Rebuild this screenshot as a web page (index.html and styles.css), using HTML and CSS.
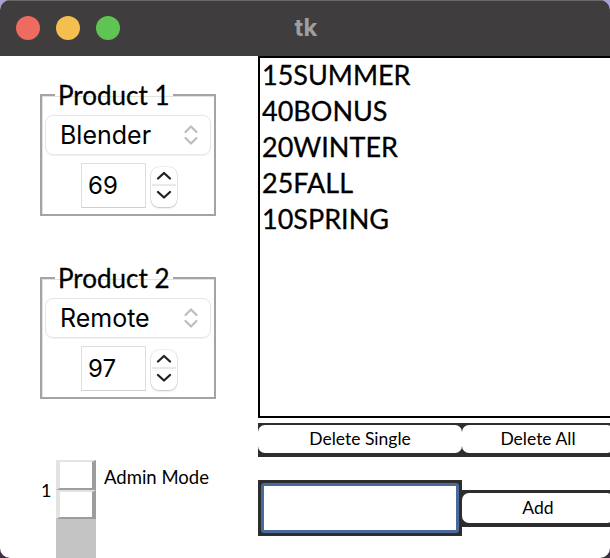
FILE: index.html
```html
<!DOCTYPE html>
<html>
<head>
<meta charset="utf-8">
<link rel="stylesheet" href="styles.css">
</head>
<body>
<div class="window">
  <div class="titlebar">
    <div class="lights">
      <span class="light red"></span>
      <span class="light yellow"></span>
      <span class="light green"></span>
    </div>
    <div class="title">tk</div>
    <div></div>
  </div>
  <div class="content">
    <div class="left">
      <fieldset class="frame frame1">
        <legend>Product 1</legend>
        <div class="combo">
          <span>Blender</span>
          <svg class="combo-arrows" width="16" height="22" viewBox="0 0 16 22"><path d="M2.5 8 L8 2.5 L13.5 8 M2.5 14 L8 19.5 L13.5 14" fill="none" stroke="#bdbdbd" stroke-width="2.2" stroke-linecap="round" stroke-linejoin="round"/></svg>
        </div>
        <div class="spin">
          <div class="spin-entry">69</div>
          <div class="spin-btns">
            <svg width="26" height="40" viewBox="0 0 26 40"><path d="M7 11.5 L13 6 L19 11.5" fill="none" stroke="#222" stroke-width="2.3" stroke-linecap="round" stroke-linejoin="round"/><path d="M1 18 H25" stroke="#d4d4d4" stroke-width="1"/><path d="M7 25 L13 30.5 L19 25" fill="none" stroke="#222" stroke-width="2.3" stroke-linecap="round" stroke-linejoin="round"/></svg>
          </div>
        </div>
      </fieldset>
      <fieldset class="frame frame2">
        <legend>Product 2</legend>
        <div class="combo">
          <span>Remote</span>
          <svg class="combo-arrows" width="16" height="22" viewBox="0 0 16 22"><path d="M2.5 8 L8 2.5 L13.5 8 M2.5 14 L8 19.5 L13.5 14" fill="none" stroke="#bdbdbd" stroke-width="2.2" stroke-linecap="round" stroke-linejoin="round"/></svg>
        </div>
        <div class="spin">
          <div class="spin-entry">97</div>
          <div class="spin-btns">
            <svg width="26" height="40" viewBox="0 0 26 40"><path d="M7 11.5 L13 6 L19 11.5" fill="none" stroke="#222" stroke-width="2.3" stroke-linecap="round" stroke-linejoin="round"/><path d="M1 18 H25" stroke="#d4d4d4" stroke-width="1"/><path d="M7 25 L13 30.5 L19 25" fill="none" stroke="#222" stroke-width="2.3" stroke-linecap="round" stroke-linejoin="round"/></svg>
          </div>
        </div>
      </fieldset>
      <div class="scale-row">
        <span class="scale-val">1</span>
        <div class="trough">
          <div class="sbox"></div>
          <div class="sbox"></div>
        </div>
        <span class="admin">Admin Mode</span>
      </div>
    </div>
    <div class="right">
      <div class="listbox">
        <div class="items">
          <div>15SUMMER</div>
          <div>40BONUS</div>
          <div>20WINTER</div>
          <div>25FALL</div>
          <div>10SPRING</div>
        </div>
      </div>
      <div class="btn-row">
        <div class="btn wide"><span>Delete Single</span></div>
        <div class="btn narrow"><span>Delete All</span></div>
      </div>
      <div class="entry-row">
        <div class="entry"><div class="entry-inner"></div></div>
        <div class="btn narrow add"><span>Add</span></div>
      </div>
    </div>
  </div>
</div>
</body>
</html>
```

FILE: styles.css
```css
html {
  background: linear-gradient(#a7a1d6 0px, #a7a1d6 30px, #3e3242 540px);
}
body {
  margin: 0;
}
.window {
  width: 610px;
  height: 558px;
  border-radius: 10px;
  overflow: hidden;
  background: #fff;
  display: flex;
  flex-direction: column;
}
.titlebar {
  height: 56px;
  flex: none;
  background: #3f3d3d;
  box-shadow: inset 0 1px 0 #6a6868;
  display: grid;
  grid-template-columns: 1fr auto 1fr;
  align-items: center;
}
.lights {
  display: flex;
  gap: 16px;
  padding-left: 16px;
}
.light {
  width: 24px;
  height: 24px;
  border-radius: 50%;
}
.red { background: #ef6a5f; }
.yellow { background: #f5bf4f; }
.green { background: #5fc454; }
.title {
  font-family: Inter, "Liberation Sans", sans-serif;
  font-weight: 700;
  font-size: 24px;
  color: #9f9f9f;
  padding-left: 2px;
  margin-top: -2px;
}
.content {
  flex: 1;
  min-height: 0;
  display: grid;
  grid-template-columns: 258px 360px;
}
.left {
  display: flex;
  flex-direction: column;
}
.frame {
  box-sizing: border-box;
  width: 176px;
  margin: 0 0 0 40px;
  padding: 0 3px 6px;
  border: 2px solid #a4a4a4;
  box-shadow: inset 1px 1px 0 #e2e2e2;
  min-width: 0;
}
.frame1 { margin-top: 24px; }
.frame2 { margin-top: 47px; }
.frame legend {
  font-family: Lato, "Open Sans", sans-serif;
  font-size: 26px;
  line-height: 30px;
  color: #000;
  margin-left: 10px;
  padding: 0 3px;
  -webkit-text-stroke: 0.3px #000;
}
.combo {
  margin-top: 5px;
  height: 40px;
  box-sizing: border-box;
  border: 1px solid #e6e6e6;
  border-radius: 8px;
  box-shadow: 0 1px 1px rgba(0, 0, 0, 0.06);
  display: flex;
  align-items: center;
  justify-content: space-between;
  padding: 0 11px 0 14px;
  font-family: Inter, "Liberation Sans", sans-serif;
  font-size: 25px;
  color: #000;
}
.spin {
  margin-top: 8px;
  height: 45px;
  display: flex;
  justify-content: center;
  gap: 5px;
  padding-left: 2px;
}
.spin-entry {
  width: 65px;
  height: 45px;
  box-sizing: border-box;
  border: 1px solid #dedede;
  border-bottom-color: #cfcfcf;
  font-family: Inter, "Liberation Sans", sans-serif;
  font-size: 24px;
  line-height: 43px;
  padding-left: 6px;
  color: #000;
}
.spin-btns {
  width: 26px;
  height: 40px;
  margin-top: 4px;
  border-radius: 8px;
  background: #fff;
  box-shadow: 0 0 0 0.5px rgba(0, 0, 0, 0.12), 0 1px 2px rgba(0, 0, 0, 0.2);
}
.spin-btns svg {
  display: block;
}
.scale-row {
  margin-top: 61px;
  margin-left: 41px;
  display: flex;
  align-items: flex-start;
  flex: 1;
}
.scale-val {
  width: 15px;
  font-family: Lato, "Open Sans", sans-serif;
  font-size: 18px;
  line-height: 22px;
  margin-top: 19px;
}
.trough {
  width: 40px;
  align-self: stretch;
  background: #c3c3c3;
}
.sbox {
  box-sizing: border-box;
  height: 29.5px;
  background: #fff;
  border-left: 4px solid #e3e3e3;
  border-top: 2px solid #e3e3e3;
  border-right: 4px solid #9d9d9d;
  border-bottom: 2px solid #9d9d9d;
}
.admin {
  margin-left: 8px;
  margin-top: 6px;
  font-family: Lato, "Open Sans", sans-serif;
  font-size: 18.5px;
  line-height: 22px;
  color: #000;
}
.right {
  display: flex;
  flex-direction: column;
}
.listbox {
  height: 362px;
  box-sizing: border-box;
  border: 2px solid #000;
  padding-left: 2px;
  font-family: Lato, "Open Sans", sans-serif;
  font-size: 27px;
  line-height: 36px;
  color: #000;
  -webkit-text-stroke: 0.3px #000;
}
.items {
  margin-top: -1px;
}
.btn-row {
  margin-top: 5px;
  display: flex;
}
.btn {
  box-sizing: border-box;
  background: #2d2d2d;
  padding: 2px 0 4px;
  display: flex;
}
.btn span {
  flex: 1;
  height: 28px;
  background: #fff;
  border-radius: 7px;
  text-align: center;
  font-family: Lato, "Open Sans", sans-serif;
  font-size: 17.5px;
  line-height: 28px;
  color: #000;
}
.wide { width: 204px; }
.narrow { width: 152px; }
.entry-row {
  margin-top: 23px;
  display: flex;
  align-items: center;
}
.entry {
  width: 204px;
  height: 56px;
  box-sizing: border-box;
  background: #2d2d2d;
  padding: 3px;
}
.entry-inner {
  height: 100%;
  box-sizing: border-box;
  border: 3px solid #4a6a9b;
  border-radius: 3px;
  background: #fff;
}
.add {
  padding: 3px 0 4px;
}
.add span {
  height: 30px;
  line-height: 30px;
}
```
